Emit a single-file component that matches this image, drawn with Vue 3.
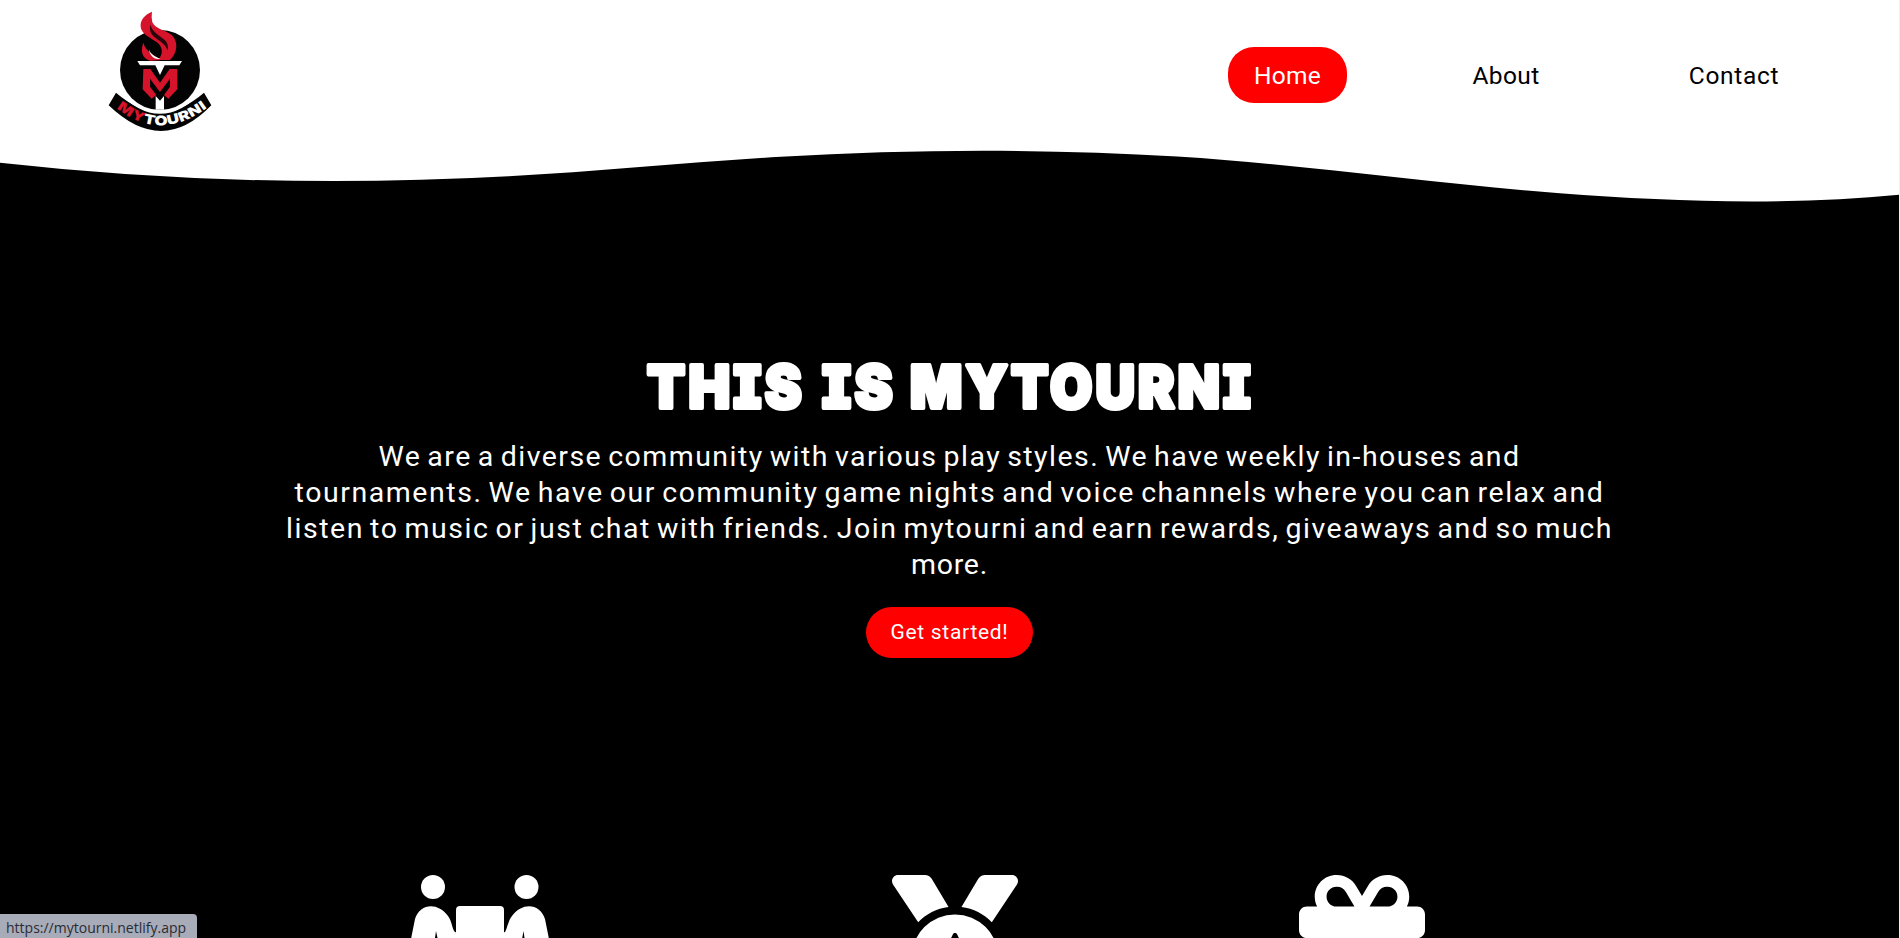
<script setup>
const links = [
  { label: 'Home', cls: 'home active' },
  { label: 'About', cls: 'about' },
  { label: 'Contact', cls: 'contact' }
]
const lines = [
  { text: 'We are a diverse community with various play styles. We have weekly in-houses and', cls: 'l1' },
  { text: 'tournaments. We have our community game nights and voice channels where you can relax and', cls: 'l2' },
  { text: 'listen to music or just chat with friends. Join mytourni and earn rewards, giveaways and so much', cls: 'l3' },
  { text: 'more.', cls: 'l4' }
]
</script>

<template>
  <div class="page">
    <header class="header">
      <svg class="logo" viewBox="0 0 420 420" role="img" aria-label="MyTourni">
        <circle cx="210" cy="210" r="120" fill="#030303" />
        <path d="M78 278 Q210 392 342 278 L364 316 Q216 470 56 316 Z" fill="#030303" />
        <path d="M84 270 Q210 404 336 270" fill="none" stroke="#fff" stroke-width="9" />
        <path d="M186 35 C165 43 150 60 152 80 C154 102 180 112 200 126 C220 142 220 162 204 180 H240 C262 161 266 126 246 106 C228 90 196 88 187 67 Q183 53 186 35 Z" fill="#d5132b" />
        <path d="M181 74 C187 99 212 106 228 124 Q236 135 233 151 C225 131 206 122 194 112 C184 103 177 92 181 74 Z" fill="#2a0509" />
        <path d="M160 128 C149 157 160 176 180 182 L210 181 C196 163 168 159 160 128 Z" fill="#d5132b" />
        <path d="M177 147 C180 163 195 170 211 176 C193 181 178 166 177 147 Z" fill="#fff" />
        <path d="M142 183 H276 L268 196 H224 L210 225 L196 196 H150 Z" fill="#fff" />
        <path d="M160 207 H181 L210 248 L239 207 H262 V268 L235 296 L222 285 L240 260 V236 L210 276 L180 236 V260 L199 285 L185 296 L158 268 Z" fill="#d5132b" />
        <path d="M197 288 L210 302 L222 288 V329 H197 Z" fill="#fff" />
        <path id="banner-arc" d="M78 323 Q214 434 366 312" fill="none" />
        <text class="banner-text"><textPath href="#banner-arc" startOffset="3" textLength="296" lengthAdjust="spacingAndGlyphs"><tspan fill="#d5132b">MY</tspan><tspan fill="#fff">TOURNI</tspan></textPath></text>
      </svg>
      <nav class="nav">
        <a v-for="l in links" :key="l.label" :class="['link', l.cls]">{{ l.label }}</a>
      </nav>
    </header>
    <svg class="wave" viewBox="0 0 1200 120" preserveAspectRatio="none">
      <path d="M985.66,92.83C906.67,72,823.78,31,743.84,14.19c-82.26-17.34-168.06-16.33-250.45.39-57.84,11.73-114,31.07-172,41.86A600.21,600.21,0,0,1,0,27.35V120H1200V95.8C1132.19,118.92,1055.71,111.31,985.66,92.83Z" />
    </svg>
    <main class="hero">
      <h1 class="title">
        <svg width="620" height="84" viewBox="0 0 620 84">
          <text x="7" y="61.500" textLength="158" lengthAdjust="spacingAndGlyphs">THIS</text>
          <text x="182" y="61.500" textLength="74" lengthAdjust="spacingAndGlyphs">IS</text>
          <text x="270" y="61.500" textLength="344" lengthAdjust="spacingAndGlyphs">MYTOURNI</text>
        </svg>
      </h1>
      <p class="intro">
        <span v-for="l in lines" :key="l.cls" :class="['line', l.cls]">{{ l.text }}</span>
      </p>
      <button class="cta">Get started!</button>
    </main>
    <section class="features">
      <svg class="carry" width="140" height="125" viewBox="0 0 140 125">
        <circle cx="33" cy="12" r="12" /><circle cx="126.500" cy="12" r="12" />
        <rect x="56" y="31" width="48" height="48" rx="4" />
        <path d="M11 64 L15 44 C20 28 38 27 48 41 C52 46 52 54 55 57 L58 58 V70 H39 L36 56 L34 70 H9 Z" />
        <path d="M149 64 L145 44 C140 28 122 27 112 41 C108 46 107 54 105 57 L102 58 V70 H121 L123.500 56 L125.500 70 H151 Z" />
      </svg>
      <svg class="medal" width="126" height="126" viewBox="0 0 512 512">
        <path d="M4.100 38.200C1.400 34.200 0 29.400 0 24.600C0 11 11 0 24.600 0H133.900c11.200 0 21.700 5.900 27.400 15.500l68.500 114.100c-48.200 6.100-91.300 28.600-123.400 61.900L4.100 38.200zm503.700 0L405.600 191.500c-32.100-33.300-75.200-55.800-123.400-61.900L350.700 15.500C356.500 5.900 366.900 0 378.100 0H487.400C501 0 512 11 512 24.600c0 4.800-1.400 9.600-4.100 13.600zM80 336a176 176 0 1 1 352 0A176 176 0 1 1 80 336z" />
        <path class="star" d="M247.600 241.100c3.500-7 13.400-7 16.800 0l22.400 45.400 50.100 7.300c7.700 1.100 10.700 10.500 5.200 16l-36.200 35.300 8.500 49.900c1.300 7.600-6.700 13.500-13.600 9.900L256 381.300l-44.800 23.600c-6.900 3.600-14.900-2.200-13.600-9.900l8.500-49.900-36.200-35.300c-5.500-5.400-2.500-14.800 5.200-16l50.100-7.300z" />
      </svg>
      <svg class="gift" width="126" height="126" viewBox="0 0 512 512">
        <path d="M190.500 68.800L225.300 128H152c-22.100 0-40-17.900-40-40s17.900-40 40-40h2.200c14.900 0 28.800 7.900 36.300 20.800zM64 88c0 14.400 3.500 28 9.600 40H32c-17.700 0-32 14.300-32 32v64c0 17.700 14.300 32 32 32H480c17.700 0 32-14.300 32-32V160c0-17.700-14.300-32-32-32H438.400c6.100-12 9.600-25.600 9.600-40c0-48.600-39.400-88-88-88h-2.200c-31.900 0-61.500 16.900-77.700 44.400L256 85.500l-24.100-41C215.700 16.900 186.100 0 154.200 0H152C103.400 0 64 39.400 64 88zm336 0c0 22.100-17.900 40-40 40H286.700l34.800-59.200C329.100 55.900 342.900 48 357.800 48H360c22.100 0 40 17.900 40 40z" />
      </svg>
    </section>
    <div class="status">https://mytourni.netlify.app</div>
  </div>
</template>

<style>
html, body { background: #000; overflow: hidden; }
</style>
<style scoped>
.page { position: relative; box-sizing: border-box; width: 1900px; height: 938px; border-right: 1px solid #f0f0f0; overflow: hidden; background: #000; color: #fff; font-family: Roboto, "Liberation Sans", sans-serif; display: flex; flex-direction: column; }
.header { height: 150px; flex: none; background: #fff; display: flex; justify-content: space-between; padding: 0 94px 0 90px; }
.logo { width: 140px; height: 140px; }
.banner-text { font: 900 40px Inter, sans-serif; letter-spacing: 1px; }
.nav { display: flex; align-items: flex-start; padding-top: 47px; }
.link { height: 56px; line-height: 58px; text-align: center; font-size: 24.500px; color: #000; border-radius: 26px; white-space: nowrap; }
.home { width: 119px; letter-spacing: .3px; }
.about { width: 120px; margin-left: 99px; letter-spacing: .4px; }
.contact { width: 142px; margin-left: 97px; letter-spacing: .7px; }
.active { background: #f00; color: #fff; }
.wave { display: block; width: 1899px; height: 56px; flex: none; background: #fff; }
.wave path { fill: #000; }
.hero { height: 669px; flex: none; display: flex; flex-direction: column; align-items: center; padding-top: 140px; box-sizing: border-box; }
.title { margin: 0; height: 84px; flex: none; font-size: 59px; }
.title svg { display: block; overflow: visible; }
.title text { font: 900 59px Inter, sans-serif; font-feature-settings: "cv08" 1; letter-spacing: 3.500px; fill: #fff; stroke: #fff; stroke-width: 4px; stroke-linejoin: round; }
.intro { margin: 9px 0 0; display: flex; flex-direction: column; align-items: center; font-size: 28.500px; line-height: 36px; word-spacing: -2.500px; }
.line { white-space: nowrap; }
.l1 { letter-spacing: 1.460px; }
.l2 { letter-spacing: 1.550px; }
.l3 { letter-spacing: 1.530px; }
.l4 { letter-spacing: .700px; }
.cta { flex: none; width: 167px; height: 51px; margin-top: 24px; padding: 0 0 2px; border: 0; border-radius: 26px; background: #f00; color: #fff; font: 21px Roboto, sans-serif; letter-spacing: .7px; }
.features { flex: none; height: 63px; margin-top: 0; display: flex; padding-left: 400px; overflow: hidden; fill: #fff; }
.features svg { flex: none; overflow: visible; }
.medal { margin-left: 352px; }
.star { fill: #000; }
.gift { margin-left: 281px; }
.status { position: absolute; left: 0; bottom: 0; box-sizing: border-box; width: 197px; height: 24px; padding-left: 6px; border-radius: 0 4px 0 0; background: #a8abb8; color: #292c35; font: 14px/27px "Open Sans", sans-serif; white-space: nowrap; }
</style>
